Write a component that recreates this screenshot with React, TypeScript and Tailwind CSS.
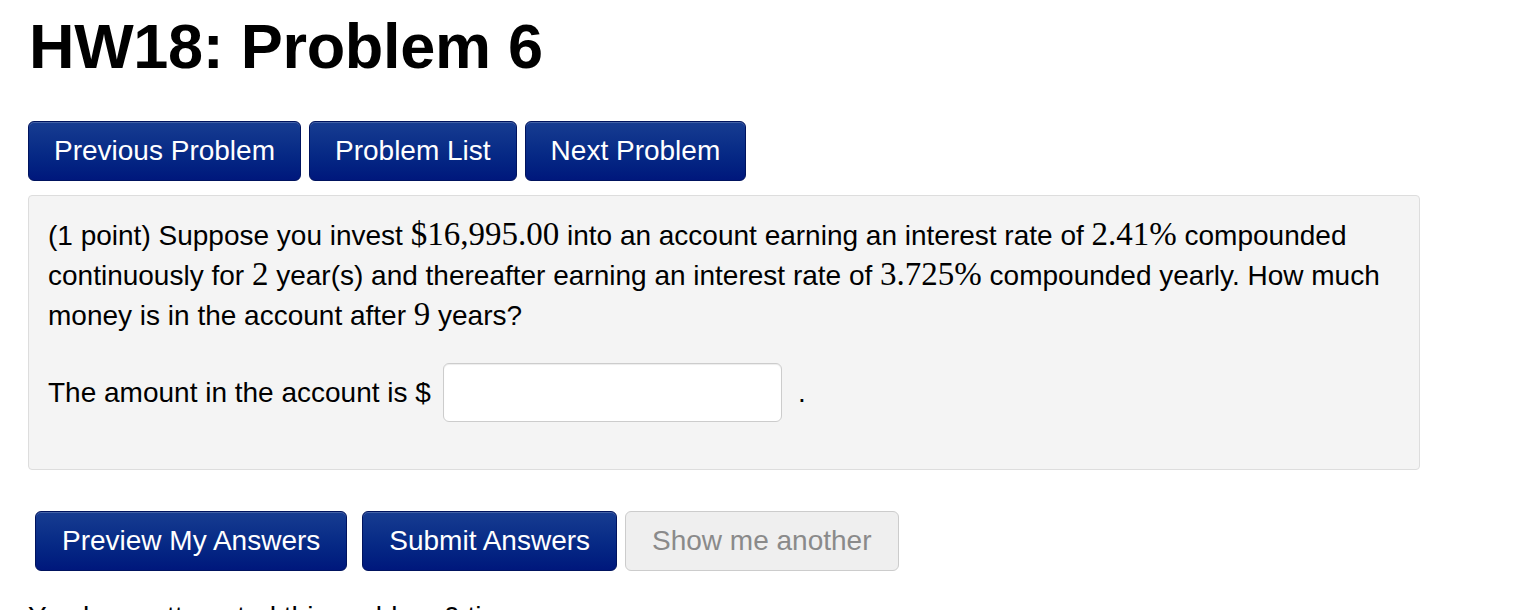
import React, { useState } from 'react';

const navButtons = ['Previous Problem', 'Problem List', 'Next Problem'];

const blueBtn =
    'h-[60px] rounded-[6px] border border-[#00135e] bg-gradient-to-b from-[#173c91] to-[#00177c] text-white text-[28px] leading-none shadow-[inset_0_1px_0_rgba(255,255,255,0.2)]';

const M: React.FC<{ children: React.ReactNode }> = ({ children }) => (
    <span className="text-[33px] leading-none" style={{ fontFamily: '"Liberation Serif", "Times New Roman", serif' }}>
        {children}
    </span>
);

const App: React.FC = () => {
    const [answer, setAnswer] = useState('');

    return (
        <div
            className="bg-white text-black pl-[28px] pt-[8px] pb-[20px]"
            style={{ fontFamily: '"Liberation Sans", Arial, Helvetica, sans-serif' }}
        >
            <h1 className="text-[63px] font-bold leading-[76px] pl-[1px] tracking-[-0.3px]">HW18: Problem 6</h1>

            <div className="flex gap-[8px] mt-[37px]">
                {navButtons.map((label) => (
                    <button key={label} className={`${blueBtn} px-[25px]`}>
                        {label}
                    </button>
                ))}
            </div>

            <div className="mt-[14px] w-[1392px] bg-[#f4f4f4] border border-[#dddddd] rounded-[4px] px-[19px] pt-[20px] pb-[20px] text-[28px]">
                <p className="leading-[40px] whitespace-nowrap">
                    (1 point) Suppose you invest <M>$16,995.00</M> into an account earning an interest rate of <M>2.41%</M> compounded
                    <br />
                    continuously for <M>2</M> year(s) and thereafter earning an interest rate of <M>3.725%</M> compounded yearly. How much
                    <br />
                    money is in the account after <M>9</M> years?
                </p>
                <div className="flex items-center mt-[27px] mb-[27px] h-[59px]">
                    <span>The amount in the account is $</span>
                    <input
                        value={answer}
                        onChange={(e) => setAnswer(e.target.value)}
                        className="ml-[12px] w-[339px] h-[59px] bg-white border border-[#cccccc] rounded-[6px] px-3 outline-none shadow-[inset_0_1px_1px_rgba(0,0,0,0.075)]"
                    />
                    <span className="ml-[16px]">.</span>
                </div>
            </div>

            <div className="flex items-center mt-[41px] ml-[7px]">
                <button className={`${blueBtn} px-[26px]`}>Preview My Answers</button>
                <button className={`${blueBtn} px-[26px] ml-[15px]`}>Submit Answers</button>
                <button className="ml-[8px] h-[60px] px-[26px] rounded-[6px] border border-[#cccccc] bg-[#efefef] text-[#8a8a8a] text-[28px] leading-none">
                    Show me another
                </button>
            </div>

            <p className="mt-[26px] text-[28px] leading-[40px]">You have attempted this problem 0 times.</p>
        </div>
    );
};

export default App;
